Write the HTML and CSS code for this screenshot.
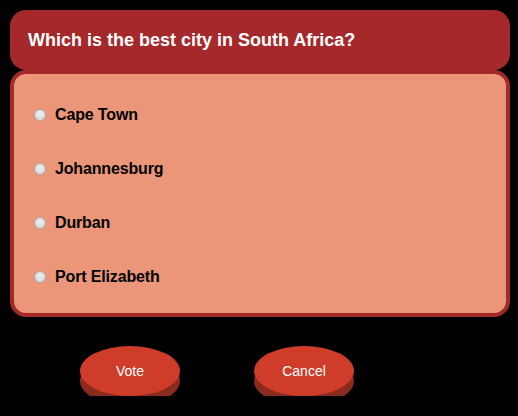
FILE: index.html
```html
<!DOCTYPE html>
<html>
<head>
<meta charset="utf-8">
<link rel="stylesheet" href="styles.css">
</head>
<body>
<div class="poll">
  <div class="poll-header">Which is the best city in South Africa?</div>
  <div class="poll-body">
    <label class="option"><span class="radio"></span>Cape Town</label>
    <label class="option"><span class="radio"></span>Johannesburg</label>
    <label class="option"><span class="radio"></span>Durban</label>
    <label class="option"><span class="radio"></span>Port Elizabeth</label>
  </div>
  <div class="actions">
    <button class="btn">Vote</button>
    <button class="btn">Cancel</button>
  </div>
</div>
</body>
</html>
```

FILE: styles.css
```css
html, body {
  margin: 0;
  padding: 0;
  background: #000;
}
body {
  font-family: "Liberation Sans", Arial, sans-serif;
}
.poll {
  padding: 10px 8px 0 10px;
  width: 500px;
}
.poll-header {
  height: 60px;
  background: #a5292a;
  border-radius: 16px;
  color: #fff;
  font-weight: bold;
  font-size: 18px;
  display: flex;
  align-items: center;
  padding-left: 18px;
  box-sizing: border-box;
}
.poll-body {
  height: 247px;
  box-sizing: border-box;
  background: #ec9679;
  border: 4px solid #a5292a;
  border-radius: 16px;
  padding: 32px 0 0 20px;
  display: flex;
  flex-direction: column;
  gap: 36px;
}
.option {
  display: flex;
  align-items: center;
  height: 18px;
  font-size: 16px;
  font-weight: bold;
  color: #000;
  letter-spacing: -0.15px;
}
.radio {
  width: 10px;
  height: 10px;
  border-radius: 50%;
  border: 1px solid #a9a9a9;
  background: radial-gradient(circle at 50% 40%, #f0f0f0 0%, #dcdcdc 70%, #c8c8c8 100%);
  margin-right: 9px;
  flex: none;
}
.actions {
  display: flex;
  gap: 74px;
  padding: 29px 0 0 70px;
}
.btn {
  width: 100px;
  height: 50px;
  border: none;
  border-radius: 50%;
  background: #cf3d2a;
  box-shadow: 0 10px 0 #8b2a1e;
  color: #fff;
  font-family: "Liberation Sans", Arial, sans-serif;
  font-size: 14px;
  padding: 0;
}
```
